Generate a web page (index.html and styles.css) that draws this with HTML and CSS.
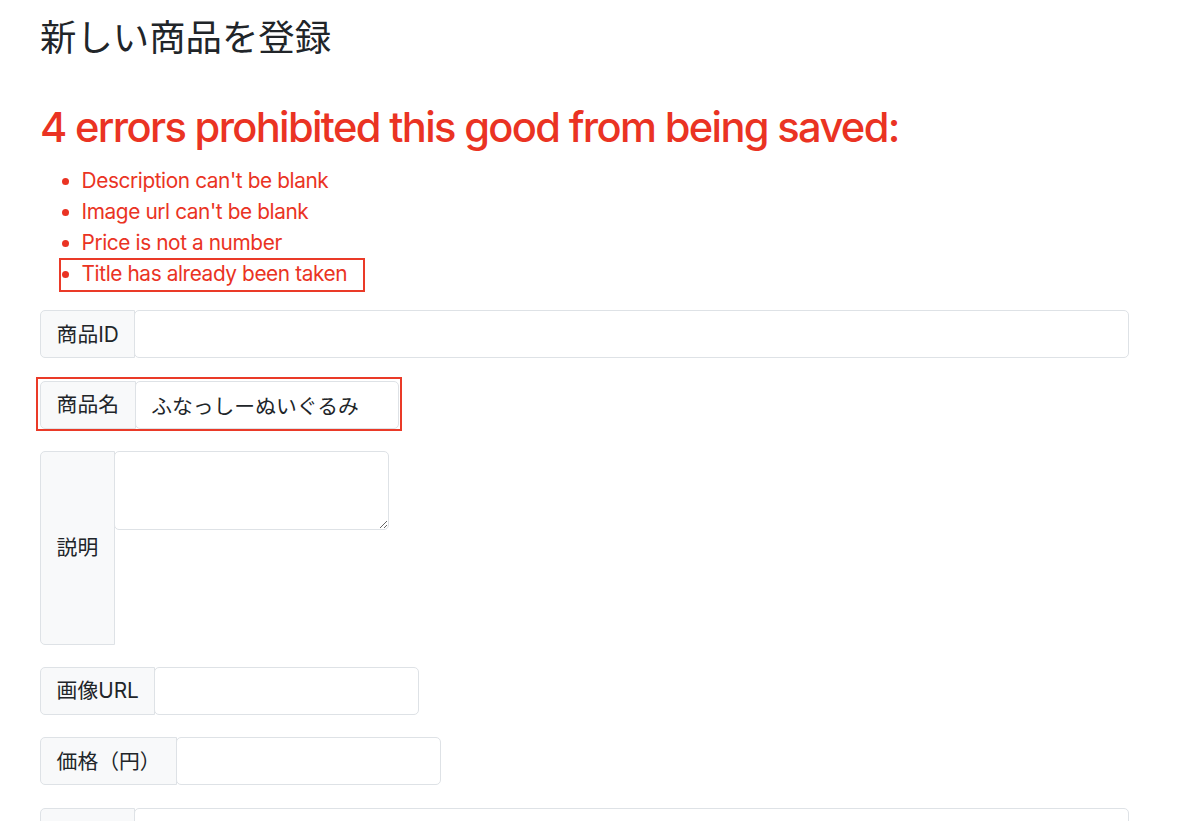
FILE: index.html
```html
<!DOCTYPE html>
<html lang="ja">
<head>
<meta charset="utf-8">
<title>新しい商品を登録</title>
<link rel="stylesheet" href="styles.css">
</head>
<body>
<main class="page">
  <h1 class="page-title">新しい商品を登録</h1>
  <section class="errors">
    <h2 class="errors-title">4 errors prohibited this good from being saved:</h2>
    <ul class="errors-list">
      <li>Description can't be blank</li>
      <li>Image url can't be blank</li>
      <li>Price is not a number</li>
      <li class="marked-item">Title has already been taken</li>
    </ul>
  </section>
  <form class="form">
    <div class="field">
      <label class="addon">商品ID</label>
      <input class="control control-full" type="text">
    </div>
    <div class="field field-fit marked-field">
      <label class="addon">商品名</label>
      <input class="control control-short" type="text" value="ふなっしーぬいぐるみ">
    </div>
    <div class="field field-area">
      <label class="addon">説明</label>
      <textarea class="control control-area"></textarea>
    </div>
    <div class="field field-fit">
      <label class="addon">画像URL</label>
      <input class="control control-short" type="text">
    </div>
    <div class="field field-fit">
      <label class="addon">価格（円）</label>
      <input class="control control-short" type="text">
    </div>
    <div class="field">
      <label class="addon addon-blank"></label>
      <input class="control control-full" type="text">
    </div>
  </form>
</main>
</body>
</html>
```
FILE: styles.css
```css
* {
  box-sizing: border-box;
}

html,
body {
  margin: 0;
  overflow: hidden;
}

body {
  font-family: Inter, "Noto Sans CJK JP", sans-serif;
  font-size: 20.8px;
  line-height: 1.5;
  color: #212529;
  background: #fff;
}

.page {
  padding: 17px 0 0 40px;
  width: 1129px;
}

.page-title {
  margin: 0 0 42px;
  font-size: 36.4px;
  font-weight: 400;
  line-height: 1.2;
}

.errors {
  color: #ea3323;
}

.errors-title {
  margin: 0 0 12px;
  font-size: 41.6px;
  font-weight: 500;
  line-height: 1.2;
  letter-spacing: -1.65px;
}

.errors-list {
  margin: 0 0 21px;
  padding-left: 41.6px;
  letter-spacing: -0.4px;
}

.marked-item {
  position: relative;
  width: fit-content;
}

.marked-item::after {
  content: "";
  position: absolute;
  left: -23px;
  right: -18px;
  top: 0;
  bottom: -3px;
  border: 2px solid #ea3a28;
}

.form {
  margin: 0;
}

.field {
  display: flex;
  height: 48px;
  margin-bottom: 22.4px;
}

.field-fit {
  width: fit-content;
}

.field-area {
  height: 193.5px;
  align-items: flex-start;
}

.marked-field {
  position: relative;
}

.marked-field::after {
  content: "";
  position: absolute;
  left: -4px;
  right: -3px;
  top: -3.5px;
  bottom: -2px;
  border: 2px solid #ea3a28;
}

.addon {
  display: flex;
  align-items: center;
  height: 100%;
  padding: 0 15.6px;
  background: #f8f9fa;
  border: 1px solid #dee2e6;
  border-radius: 5px 0 0 5px;
  white-space: nowrap;
  color: #212529;
}

.addon-blank {
  width: 95px;
}

.control {
  margin: 0 0 0 -1px;
  height: 100%;
  padding: 0 15.6px;
  font: inherit;
  color: #212529;
  background: #fff;
  border: 1px solid #dee2e6;
  border-radius: 5px;
  outline: none;
}

.control-full {
  flex: 1;
  min-width: 0;
}

.control-short {
  width: 264.5px;
}

.control-area {
  width: 275.6px;
  height: 79px;
  padding: 7.8px 15.6px;
  line-height: 1.5;
}
```
